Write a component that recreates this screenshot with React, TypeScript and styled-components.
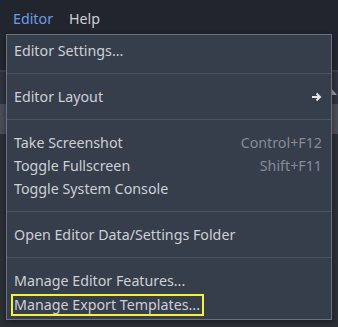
import styled, {createGlobalStyle} from 'styled-components';

const GlobalStyle = createGlobalStyle`
  html, body {
    margin: 0;
    padding: 0;
    background: #21252e;
  }
  * {
    box-sizing: border-box;
  }
`;

type Entry =
  | {kind: 'item'; label: string; shortcut?: string; submenu?: boolean; highlighted?: boolean}
  | {kind: 'separator'};

const entries: Entry[] = [
  {kind: 'item', label: 'Editor Settings...'},
  {kind: 'separator'},
  {kind: 'item', label: 'Editor Layout', submenu: true},
  {kind: 'separator'},
  {kind: 'item', label: 'Take Screenshot', shortcut: 'Control+F12'},
  {kind: 'item', label: 'Toggle Fullscreen', shortcut: 'Shift+F11'},
  {kind: 'item', label: 'Toggle System Console'},
  {kind: 'separator'},
  {kind: 'item', label: 'Open Editor Data/Settings Folder'},
  {kind: 'separator'},
  {kind: 'item', label: 'Manage Editor Features...'},
  {kind: 'item', label: 'Manage Export Templates...', highlighted: true},
];

const ArrowIcon = () => (
  <svg width="11" height="10" viewBox="0 0 11 10">
    <path
      d="M1 5h8M5.5 1.5L9 5 5.5 8.5"
      fill="none"
      stroke="#e4e6ea"
      strokeWidth="2"
    />
  </svg>
);

const App = () => {
  return (
    <>
      <GlobalStyle />
      <Screen>
        <MenuBar>
          <MenuTitle $active>Editor</MenuTitle>
          <MenuTitle>Help</MenuTitle>
        </MenuBar>
        <Workspace>
          <ToolStrip />
          <TabStrip>
            <TabMarker />
          </TabStrip>
          <DockHeader />
          <DockBody />
        </Workspace>
        <Popup>
          {entries.map((entry, i) =>
            entry.kind === 'separator' ? (
              <Separator key={i} />
            ) : (
              <Item key={i}>
                <Label $highlighted={entry.highlighted}>{entry.label}</Label>
                {entry.shortcut && <Shortcut>{entry.shortcut}</Shortcut>}
                {entry.submenu && <ArrowIcon />}
              </Item>
            ),
          )}
        </Popup>
      </Screen>
    </>
  );
};

const Screen = styled.div`
  position: relative;
  width: 338px;
  height: 327px;
  overflow: hidden;
  background: #21252e;
  font-family: 'Noto Sans', 'DejaVu Sans', sans-serif;
  display: flex;
  flex-direction: column;
`;

const MenuBar = styled.div`
  display: flex;
  gap: 16px;
  height: 34px;
  padding: 9px 0 0 13px;
`;

const MenuTitle = styled.div<{$active?: boolean}>`
  font-size: 14.25px;
  line-height: 20px;
  color: ${p => (p.$active ? '#6d9de6' : '#cdd0d6')};
`;

const Workspace = styled.div`
  flex: 1;
  display: flex;
  flex-direction: column;
  background: #262a33;
`;

const ToolStrip = styled.div`
  height: 36px;
  background: #232730;
`;

const TabStrip = styled.div`
  height: 34px;
  background: #2f3440;
  border-top: 2px solid #3a404d;
  display: flex;
  justify-content: flex-end;
  align-items: flex-start;
  padding: 16px 1px 0 0;
`;

const TabMarker = styled.div`
  width: 0;
  height: 0;
  border-right: 6px solid transparent;
  border-bottom: 7px solid #9aa0ab;
`;

const DockHeader = styled.div`
  height: 30px;
  background: #4a4e57;
`;

const DockBody = styled.div`
  flex: 1;
  background: #2c2f36;
`;

const Popup = styled.div`
  position: absolute;
  top: 34px;
  left: 6px;
  width: 326px;
  height: 286px;
  background: #363d4b;
  border: 1px solid #6b7282;
  padding: 4px 0;
  display: flex;
  flex-direction: column;
  box-shadow: 0 2px 6px rgba(0, 0, 0, 0.45);
`;

const Item = styled.div`
  height: 23px;
  display: flex;
  align-items: center;
  justify-content: space-between;
  padding: 0 9px 0 7px;
  font-size: 14.25px;
  color: #cdd0d6;
`;

const Label = styled.span<{$highlighted?: boolean}>`
  line-height: 18px;
  white-space: nowrap;
  ${p =>
    p.$highlighted &&
    `
    border: 2px solid #f4f33c;
    margin: 3px 0 0 -3px;
    padding: 0 2px 0 1px;
  `}
`;

const Shortcut = styled.span`
  color: #878c97;
  white-space: nowrap;
`;

const Separator = styled.div`
  height: 23px;
  display: flex;
  flex-direction: column;
  padding-top: 11px;
  &::before {
    content: '';
    display: block;
    height: 1px;
    background: #4c5363;
  }
`;

export default App;
